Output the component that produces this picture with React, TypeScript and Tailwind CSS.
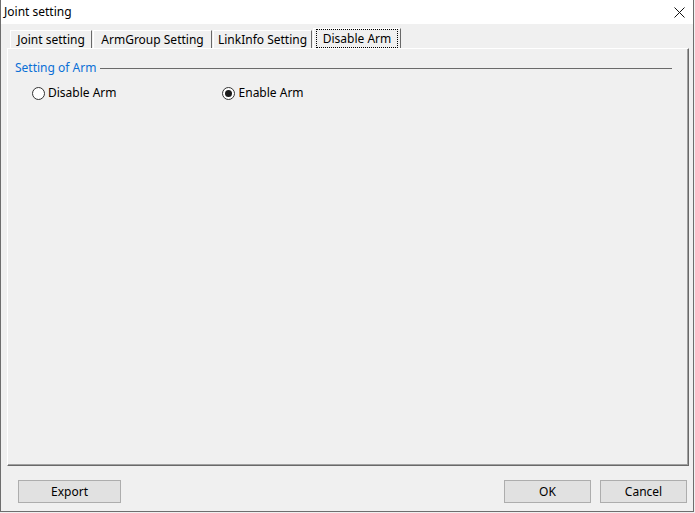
import React from 'react';

const tabs = [
  { label: 'Joint setting', w: 'w-[82px]' },
  { label: 'ArmGroup Setting', w: 'w-[119px]' },
  { label: 'LinkInfo Setting', w: 'w-[99px]' },
];

const Radio: React.FC<{ checked?: boolean; label: string; className?: string }> = ({ checked, label, className }) => (
  <label className={`flex items-center gap-[3px] ${className ?? ''}`}>
    <span className="w-[13px] h-[13px] rounded-full border border-[#333333] bg-white flex items-center justify-center">
      {checked && <span className="w-[7px] h-[7px] rounded-full bg-[#1a1a1a]" />}
    </span>
    <span>{label}</span>
  </label>
);

const DlgButton: React.FC<{ label: string; className?: string }> = ({ label, className }) => (
  <button className={`h-[23px] w-[87px] bg-[#e1e1e1] border border-[#adadad] text-[12px] text-black ${className ?? ''}`}>
    {label}
  </button>
);

export default function App() {
  return (
    <div className="w-[695px] h-[513px] bg-[#f0f0f0] overflow-hidden font-['Noto_Sans',sans-serif] text-[12px] text-black">
      <div className="w-[694px] h-[512px] border-l border-r border-b border-[#6e6e6e] flex flex-col">
        {/* Title bar */}
        <div className="h-[24px] bg-white flex items-center justify-between pl-[3px] pr-[8px]">
          <span className="leading-none">Joint setting</span>
          <svg width="11" height="11" viewBox="0 0 11 11">
            <path d="M0.5 0.5 L10.5 10.5 M10.5 0.5 L0.5 10.5" stroke="#111" strokeWidth="1" />
          </svg>
        </div>

        {/* Tabs */}
        <div className="ml-[6px] pt-[4px] h-[24px] pl-[3px] flex items-end gap-[1px]">
          {tabs.map((t) => (
            <div
              key={t.label}
              className={`${t.w} h-[18px] border-t border-l border-white border-r border-r-[#696969] flex items-end justify-center leading-none pb-[2px]`}
            >
              {t.label}
            </div>
          ))}
          <div className="w-[88px] h-[20px] border-t border-l border-white border-r border-r-[#696969] flex items-end justify-center">
            <span className="border border-dotted border-black px-[6px] leading-[16px] pt-[1px]">Disable Arm</span>
          </div>
        </div>

        {/* Panel */}
        <div className="ml-[6px] w-[682px] h-[418px] border-t border-l border-white border-r border-b border-r-[#696969] border-b-[#696969]">
          <div className="h-full border-r border-b border-r-[#a0a0a0] border-b-[#a0a0a0] pt-[11px] pl-[7px]">
            <div className="flex items-center h-[16px] pr-[15px]">
              <span className="text-[#0a6fd6] leading-none">Setting of Arm</span>
              <div className="ml-[4px] flex-1 h-px bg-[#6a6a6a]" />
            </div>
            <div className="flex items-center mt-[9px] h-[16px]">
              <Radio label="Disable Arm" className="ml-[17px]" />
              <Radio checked label="Enable Arm" className="ml-[105px] gap-[4px]" />
            </div>
          </div>
        </div>

        {/* Bottom buttons */}
        <div className="flex items-start pt-[14px] pl-[17px] pr-[6px]">
          <DlgButton label="Export" className="w-[103px]" />
          <div className="flex-1" />
          <DlgButton label="OK" />
          <DlgButton label="Cancel" className="ml-[9px]" />
        </div>
      </div>
    </div>
  );
}
